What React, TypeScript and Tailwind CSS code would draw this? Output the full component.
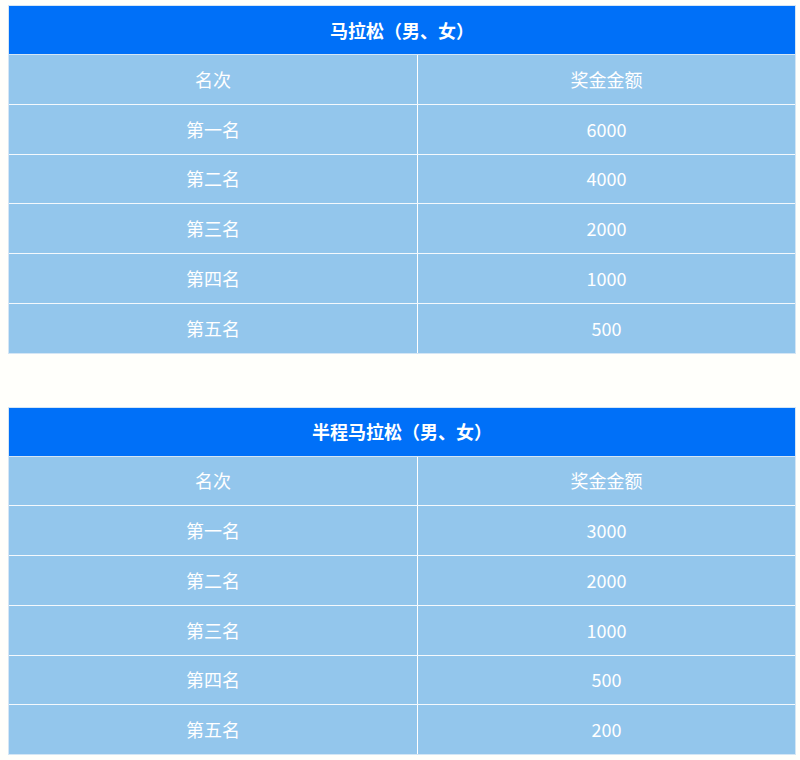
import React from "react";

type Row = [string, string];

const Table = ({ title, rows }: { title: string; rows: Row[] }) => (
  <div className="border border-[#d4e6f5] bg-[#93c6ec]">
    <div className="h-[48px] bg-[#0070f8] flex items-center justify-center text-white font-bold text-[18px]">
      {title}
    </div>
    {rows.map(([a, b], i) => (
      <div
        key={i}
        className={`grid grid-cols-[409px_1fr] h-[49.75px] border-t text-white text-[18px] ${
          i === 0 ? "border-[#d4e6f5]" : "border-[#f4f9fd]"
        }`}
      >
        <div className="flex items-center justify-center border-r border-white">{a}</div>
        <div className="flex items-center justify-center">{b}</div>
      </div>
    ))}
  </div>
);

export default function App() {
  return (
    <div
      className="w-[800px] h-[760px] bg-[#fffffb] pt-[5px] pl-[8px] pr-[4px] flex flex-col gap-[53px]"
      style={{ fontFamily: '"Noto Sans CJK SC", "Noto Sans", sans-serif' }}
    >
      <Table
        title="马拉松（男、女）"
        rows={[
          ["名次", "奖金金额"],
          ["第一名", "6000"],
          ["第二名", "4000"],
          ["第三名", "2000"],
          ["第四名", "1000"],
          ["第五名", "500"],
        ]}
      />
      <Table
        title="半程马拉松（男、女）"
        rows={[
          ["名次", "奖金金额"],
          ["第一名", "3000"],
          ["第二名", "2000"],
          ["第三名", "1000"],
          ["第四名", "500"],
          ["第五名", "200"],
        ]}
      />
    </div>
  );
}
